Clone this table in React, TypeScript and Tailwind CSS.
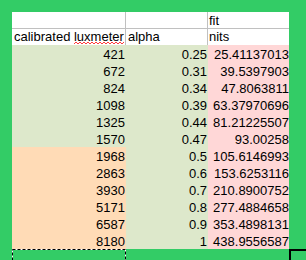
import React from "react";

const rows: [string, string, string][] = [
  ["421", "0.25", "25.41137013"],
  ["672", "0.31", "39.5397903"],
  ["824", "0.34", "47.8063811"],
  ["1098", "0.39", "63.37970696"],
  ["1325", "0.44", "81.21225507"],
  ["1570", "0.47", "93.00258"],
  ["1968", "0.5", "105.6146993"],
  ["2863", "0.6", "153.6253116"],
  ["3930", "0.7", "210.8900752"],
  ["5171", "0.8", "277.4884658"],
  ["6587", "0.9", "353.4898131"],
  ["8180", "1", "438.9556587"],
];

export default function App() {
  return (
    <div
      className="relative w-[306px] h-[260px] bg-[#33cc66] pl-[12px] pt-[12px] overflow-hidden text-[13px] text-black"
      style={{ fontFamily: '"Liberation Sans", Arial, sans-serif' }}
    >
      <div className="grid grid-cols-[114px_82px_81px] w-[277px]">
        {/* header row 1 */}
        <div className="h-[17px] bg-white border-r border-b border-[#c0c0c0]" />
        <div className="h-[17px] bg-white border-r border-b border-[#c0c0c0]" />
        <div className="h-[17px] bg-white border-b border-[#c0c0c0] leading-[17px] pt-[0px] pl-[1px]">fit</div>
        {/* header row 2 */}
        <div className="relative h-[16px] bg-white border-r border-[#c0c0c0] leading-[16px] pl-[2px] whitespace-nowrap overflow-hidden">
          calibrated luxmeter
          <svg className="absolute left-[62px] top-[12px]" width="50" height="4" viewBox="0 0 50 4">
            <path
              d="M0 3 L2 1 L4 3 L6 1 L8 3 L10 1 L12 3 L14 1 L16 3 L18 1 L20 3 L22 1 L24 3 L26 1 L28 3 L30 1 L32 3 L34 1 L36 3 L38 1 L40 3 L42 1 L44 3 L46 1 L48 3 L50 1"
              fill="none"
              stroke="#ff3b3b"
              strokeWidth="1"
            />
          </svg>
        </div>
        <div className="h-[16px] bg-white border-r border-[#c0c0c0] leading-[16px] pl-[2px]">alpha</div>
        <div className="h-[16px] bg-white leading-[16px] pl-[1px]">nits</div>
        {rows.map(([a, b, c], i) => (
          <React.Fragment key={i}>
            <div
              className={`h-[17px] leading-[17px] pt-[1px] pr-[1px] text-right ${
                i < 6 ? "bg-[#dde8cb]" : "bg-[#ffdbb6]"
              }`}
            >
              {a}
            </div>
            <div className="h-[17px] leading-[17px] pt-[1px] pr-[1px] text-right bg-[#dde8cb]">{b}</div>
            <div className="h-[17px] leading-[17px] pt-[1px] pr-[0px] text-right bg-[#ffd7d7]">{c}</div>
          </React.Fragment>
        ))}
      </div>
      {/* copy marquee */}
      <svg className="absolute left-[12px] top-[249px]" width="115" height="12">
        <rect x="0.5" y="0.5" width="113" height="20" fill="none" stroke="#ffffff" strokeWidth="1" />
        <rect x="0.5" y="0.5" width="113" height="20" fill="none" stroke="#000000" strokeWidth="1" strokeDasharray="3 2" />
      </svg>
      {/* selected cell cursor */}
      <div className="absolute left-[289px] top-[249px] w-[40px] h-[30px] border-l-2 border-t-2 border-black" />
    </div>
  );
}
